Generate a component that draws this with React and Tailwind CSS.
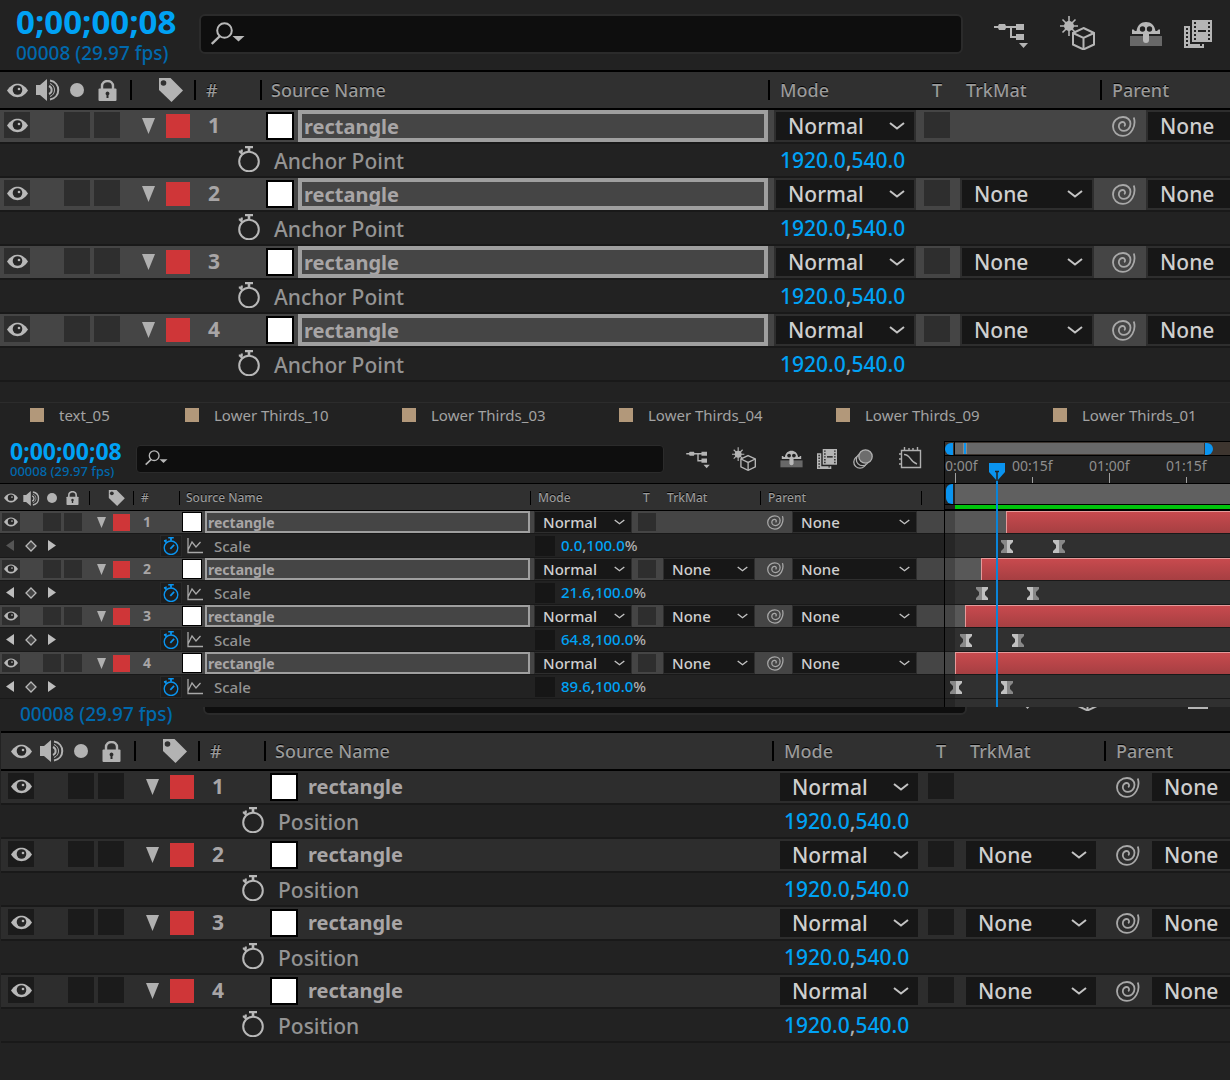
import clsx from "clsx";

// Every class that differs between the zoomed panels and the compact one
const sizes = {
  lg: {
    time: "text-[33px] leading-[36px]",
    fps: "text-[19px] leading-[26px]",
    timeBox: "w-[183px] pl-4 pt-1",
    search: "w-[764px] h-10 mt-3.5 border-2 rounded-md",
    searchIcon: "w-[34px] h-6 left-3 top-[22px]",
    topbar: "h-[70px]",
    header: "h-10 border-y-2 text-lg",
    headLeft: "w-[130px] pl-[7px]",
    headEye: "w-[21px] h-[15px]",
    headSpeaker: "w-6 h-[22px] ml-2",
    headDot: "w-3.5 h-3.5 ml-2.5",
    headLock: "w-[19px] h-[21px] ml-3.5",
    headTag: "w-16 pl-[26px] border-l-2",
    tag: "w-[25px] h-6",
    headNum: "w-[66px] pl-2.5 border-l-2",
    headName: "w-[508px] pl-[9px] border-l-2",
    headMode: "w-[162px] pl-2.5 border-l-2",
    headT: "w-9 pl-0.5",
    headTrk: "w-[134px]",
    headParent: "pl-2.5 border-l-2",
    headSep: "h-5",
    row: "h-8 pl-1",
    line: "h-0.5",
    box: "w-[26px] h-[26px] mt-0.5",
    eye: "w-[21px] h-[15px]",
    solo: "ml-[34px]",
    lock: "ml-1",
    twirl: "ml-[22px] w-[13px] h-4",
    label: "ml-[11px] w-6 h-6",
    num: "w-12 text-[21px]",
    thumb: "ml-7 w-7 h-7 border-2",
    name: "ml-1 w-[470px] h-8 text-xl",
    nameOn: "border-4 pl-0.5",
    nameOff: "pl-1.5 leading-8",
    mode: "ml-1.5 w-[142px]",
    tBox: "ml-2",
    trk: "ml-2.5 w-[134px]",
    spiral: "ml-[18px] w-6 h-[21px]",
    parent: "ml-2.5 w-[190px]",
    select: "h-8 border-2 pl-3 text-[21px]",
    chevron: "w-4 h-2 right-[11px] top-3",
    propRow: "h-8",
    propLeft: "w-[238px]",
    watch: "w-[22px] h-[26px]",
    watchBox: "h-[26px] w-[22px] pb-0.5",
    prop: "w-[506px] pl-3.5 text-[21px] pt-1",
    value: "ml-3.5 w-[200px] text-[21px] pt-0.5",
  },
  sm: {
    time: "text-[23px] leading-[21px]",
    fps: "text-[13px] leading-[18px]",
    timeBox: "w-[127px] pl-2.5",
    search: "w-[528px] h-7 mt-1 border rounded",
    searchIcon: "w-[23px] h-4 left-[9px] top-[9px]",
    topbar: "h-[42px]",
    header: "h-7 border-y pt-0.5 text-xs",
    headLeft: "w-[89px] pl-1",
    headEye: "w-[14px] h-[10px]",
    headSpeaker: "w-[17px] h-[15px] ml-[5px]",
    headDot: "w-2.5 h-2.5 ml-[7px]",
    headLock: "w-[13px] h-[14px] ml-[9px]",
    headTag: "w-11 pl-[18px] border-l",
    tag: "w-[17px] h-4",
    headNum: "w-[46px] pl-[7px] border-l",
    headName: "w-[351px] pl-1.5 border-l",
    headMode: "w-[113px] pl-[7px] border-l",
    headT: "w-6",
    headTrk: "w-[93px]",
    headParent: "pl-[7px] border-l",
    headSep: "h-3.5",
    row: "h-[22px] pl-0.5",
    line: "h-px",
    box: "w-[18px] h-[18px] mt-0.5",
    eye: "w-[14px] h-[10px]",
    solo: "ml-[23px]",
    lock: "ml-[3px]",
    twirl: "ml-[15px] w-[9px] h-[11px]",
    label: "ml-[7px] w-[17px] h-[17px]",
    num: "w-[34px] text-sm",
    thumb: "ml-[18px] w-5 h-5 border",
    name: "ml-[3px] w-[325px] h-[22px] text-sm",
    nameOn: "border-2 pl-px",
    nameOff: "pl-1",
    mode: "ml-1 w-[98px]",
    tBox: "ml-1.5",
    trk: "ml-[7px] w-[92px]",
    spiral: "ml-3 w-[17px] h-[15px]",
    parent: "ml-2 w-[125px]",
    select: "h-[22px] border pl-2 text-[15px]",
    chevron: "w-[11px] h-1.5 right-[7px] top-2",
    propRow: "h-[23px]",
    propLeft: "w-[160px]",
    watch: "w-4 h-[18px]",
    watchBox: "h-[22px] w-[22px] border border-[#292929] bg-[#1d1d1d]",
    prop: "w-[321px] pl-[11px] text-[15px] pt-0.5",
    value: "w-[200px] pl-1.5 text-[15px]",
  },
};

const layers = [
  { id: 1, start: 10, keys: [10, 20], scale: "0.0" },
  { id: 2, start: 5, keys: [5, 15], scale: "21.6" },
  { id: 3, start: 2, keys: [2, 12], scale: "64.8" },
  { id: 4, start: 0, keys: [0, 10], scale: "89.6" },
];

const tabs = ["text_05", "Lower Thirds_10", "Lower Thirds_03", "Lower Thirds_04", "Lower Thirds_09", "Lower Thirds_01"];

const frameX = (frame) => Math.round((frame * 77) / 15);

const Eye = ({ className }) => (
  <svg viewBox="0 0 21 15" className={className}>
    <path d="M0 7.500C3.500 2.500 7 .8 10.500 .8S17.500 2.500 21 7.500c-3.500 5-7 6.700-10.500 6.700S3.500 12.500 0 7.500z" fill="#b8b8b8" />
    <circle cx="10.500" cy="7" r="4.800" fill="#262626" />
    <circle cx="12" cy="6" r="1.300" fill="#b8b8b8" />
  </svg>
);

const Speaker = ({ className }) => (
  <svg viewBox="0 0 24 22" className={className} fill="none" stroke="#b3b3b3" strokeWidth="2">
    <path d="M0 6h4l7-6v22l-7-6H0z" fill="#b3b3b3" stroke="none" />
    <path d="M13 7c3.500 1.500 3.500 6.500 0 8" />
    <path d="M14 1.500c11 2 11 17 0 19" />
    <path d="M14 4.500c6 2 6 11 0 13" strokeWidth="1" />
  </svg>
);

const Lock = ({ className }) => (
  <svg viewBox="0 0 19 21" className={className}>
    <path d="M4 9V6a5.500 5 0 0 1 11 0v3" fill="none" stroke="#b3b3b3" strokeWidth="2.400" />
    <rect x=".5" y="8.500" width="18" height="12.500" rx="1" fill="#b3b3b3" />
    <path d="M9.500 11.500a2 2 0 0 1 1 3.700V18h-2v-2.800a2 2 0 0 1 1-3.700z" fill="#2c2c2c" />
  </svg>
);

const Tag = ({ className }) => (
  <svg viewBox="0 0 25 24" className={className}>
    <path d="M1 0h11.500L25 12.500 13.500 24 1 12z" fill="#b3b3b3" />
    <circle cx="5.500" cy="5" r="2.800" fill="#303030" />
  </svg>
);

const Stopwatch = ({ className, active }) => (
  <svg viewBox="0 0 22 26" className={className} fill="none" stroke={active ? "#0a94f0" : "#b8b8b8"} strokeWidth="2">
    <circle cx="11" cy="15.500" r="9.800" />
    <path d="M7 1h8M11 1v4.500" strokeWidth="2.600" />
    <path d="M.8 5.500h3v-2M2 6l3 2.500" />
    {active && <path d="M10 17l5.500-5.500" strokeWidth="2.600" />}
  </svg>
);

const Spiral = ({ className }) => (
  <svg viewBox="0 0 24 21" className={className} fill="none" stroke="#a8a8a8" strokeWidth="1.800">
    <path d="M21.800 1.500C24.500 10 19 19.800 11 19.800 5 19.800 1 15.500 1 10.500 1 5 5.500 1 11 1c4.500 0 7.500 3 7.500 6.800 0 4-3 7-6.500 7-3 0-5.200-2-5.200-4.600C6.800 7.500 9 5.800 11 6c2 .2 2.800 2.800 1.200 4.300" />
  </svg>
);

const SearchIcon = ({ className }) => (
  <svg viewBox="0 0 34 24" className={className}>
    <circle cx="13.500" cy="8.500" r="7.300" fill="none" stroke="#b8b8b8" strokeWidth="2" />
    <path d="M9 14L.8 22" stroke="#b8b8b8" strokeWidth="2.400" />
    <path d="M21.500 14h12l-6 5.500z" fill="#b8b8b8" />
  </svg>
);

const FlowIcon = ({ className }) => (
  <svg viewBox="0 0 34 26" className={className} fill="#b5b5b5">
    <path d="M0 3h4l1-2h6l1 2h10V1h8v6h-8V5h-4v8h4v-2h8v6h-8v-2h-6V5h-4l-1 2H5L4 5H0z" />
    <path d="M25 20h9l-4.500 5z" />
  </svg>
);

const DraftIcon = ({ className }) => (
  <svg viewBox="0 0 35 34" className={className} fill="none" stroke="#b5b5b5">
    <circle cx="9" cy="10" r="5" fill="#b5b5b5" stroke="none" />
    <path d="M9 0v20M0 10h18M2.500 3.500l13 13M15.500 3.500l-13 13" strokeWidth="1.600" />
    <path d="M23.500 12l10.500 5v11.500l-10.500 5-10.500-5V17z" fill="#222" strokeWidth="2" />
    <path d="M13 17l10.500 5L34 17M23.500 22v11" strokeWidth="2" />
  </svg>
);

const ShyIcon = ({ className }) => (
  <svg viewBox="0 0 32 26" className={className}>
    <path d="M0 15h32v10H0z" fill="#686868" />
    <path d="M2 13V8.500h1.500l1.500 1.500h1.500C7.500 4 11 1 16 1s8.500 3 9.500 9H27l1.500-1.500H30V13z" fill="#b8b8b8" />
    <path d="M13 10h6v9a3 3 0 0 1-6 0z" fill="#b8b8b8" />
    <circle cx="12.500" cy="8" r="2.700" fill="#222" />
    <circle cx="19.500" cy="8" r="2.700" fill="#222" />
  </svg>
);

const FilmIcon = ({ className }) => (
  <svg viewBox="0 0 28 28" className={className}>
    <path d="M0 6h6v18h14v4H0z" fill="#b5b5b5" />
    <path d="M3 8v18" stroke="#222" strokeWidth="2" strokeDasharray="2 2" />
    <path d="M16 25h2" stroke="#222" strokeWidth="2" />
    <path d="M8 0h20v22H8z" fill="#b5b5b5" />
    <path d="M11 2v20M25 2v20" stroke="#222" strokeWidth="2" strokeDasharray="2 2" />
    <path d="M14 11h8" stroke="#222" strokeWidth="2" />
  </svg>
);

const BlurIcon = ({ className }) => (
  <svg viewBox="0 0 20 20" className={className} fill="#222" stroke="#b0b0b0" strokeWidth="1.300">
    <circle cx="7" cy="13" r="6.200" />
    <circle cx="9.500" cy="10.500" r="6.200" />
    <circle cx="12.500" cy="7.500" r="6.700" fill="#6d6d6d" />
  </svg>
);

const GraphEditorIcon = ({ className }) => (
  <svg viewBox="0 0 23 22" className={className} fill="none" stroke="#b0b0b0" strokeWidth="1.400">
    <path d="M2.500 3.500h19v17h-19z" />
    <path d="M5 7.500c7 0 5 7 13 9.500" />
    <path d="M5.500 3V0M10 3V1M14 3V1M18.500 3V0M2 7H0M2 12H0M2 17H0" />
  </svg>
);

const Chevron = ({ className }) => (
  <svg viewBox="0 0 16 8" className={className} fill="none" stroke="#c4c4c4" strokeWidth="2">
    <path d="M1 1l7 5.500L15 1" />
  </svg>
);

const Keyframe = ({ left, out }) => (
  <svg viewBox="0 0 12 13" className="absolute top-1.5 w-3 h-[13px]" style={{ left }}>
    <path d="M0 0h6v13H0v-2l3-3V5L0 2z" fill={out ? "#c0c0c0" : "#888"} />
    <path d="M12 0H6v13h6v-2L9 8V5l3-3z" fill={out ? "#888" : "#c0c0c0"} />
  </svg>
);

const Dropdown = ({ s, label, value, options, selected, className }) => (
  <div className={clsx("relative shrink-0", className)}>
    <select
      aria-label={label}
      defaultValue={value}
      className={clsx(
        "block w-full appearance-none bg-[#171717] bg-clip-padding py-0 leading-none font-medium text-[#cfcfcf] outline-none",
        selected ? "border-[#2e2e2e]" : "border-transparent",
        s.select
      )}
    >
      {options.map((option) => (
        <option key={option}>{option}</option>
      ))}
    </select>
    <Chevron className={clsx("absolute pointer-events-none", s.chevron)} />
  </div>
);

const TopBar = ({ s, children }) => (
  <div className={clsx("flex shrink-0 items-start", s.topbar)}>
    <div className={clsx("shrink-0 whitespace-nowrap", s.timeBox)}>
      <div className={clsx("font-bold text-[#00a2f5]", s.time)}>0;00;00;08</div>
      <div className={clsx("font-medium text-[#0069ad]", s.fps)}>00008 (29.97 fps)</div>
    </div>
    <div className={clsx("relative", s === sizes.sm ? "ml-[9px]" : "ml-4")}>
      <input
        type="search"
        aria-label="Search layers"
        className={clsx("block bg-[#0e0e0e] border-[#2b2b2b] pl-12 text-[#c0c0c0] outline-none", s.search)}
      />
      <SearchIcon className={clsx("absolute pointer-events-none", s.searchIcon)} />
    </div>
    {children}
  </div>
);

const ZoomedTopBar = () => (
  <TopBar s={sizes.lg}>
    <button aria-label="Mini flowchart" className="ml-[31px] mt-[23px] shrink-0"><FlowIcon className="w-[34px] h-[26px]" /></button>
    <button aria-label="Draft 3D" className="ml-8 mt-4 shrink-0"><DraftIcon className="w-[35px] h-[34px]" /></button>
    <button aria-label="Hide shy layers" className="ml-[35px] mt-[21px] shrink-0"><ShyIcon className="w-8 h-[26px]" /></button>
    <button aria-label="Frame blending" className="ml-[22px] mt-5 shrink-0"><FilmIcon className="w-7 h-7" /></button>
  </TopBar>
);

const HeaderCell = ({ s, className, children }) => (
  <div className={clsx("flex shrink-0 items-center border-black", s.headSep, className)}>{children}</div>
);

const ColumnHeader = ({ s, className, children }) => (
  <div
    className={clsx(
      "flex items-center overflow-hidden whitespace-nowrap bg-[#303030] border-black font-medium text-[#9a9a9a] [text-shadow:0_-1px_0_#000]",
      s.header,
      className
    )}
  >
    <div className={clsx("flex shrink-0 items-center", s.headLeft)}>
      <Eye className={s.headEye} />
      <Speaker className={s.headSpeaker} />
      <span className={clsx("rounded-full bg-[#b3b3b3]", s.headDot)} />
      <Lock className={s.headLock} />
    </div>
    <HeaderCell s={s} className={s.headTag}><Tag className={clsx("shrink-0", s.tag)} /></HeaderCell>
    <HeaderCell s={s} className={s.headNum}>#</HeaderCell>
    <HeaderCell s={s} className={s.headName}>Source Name</HeaderCell>
    <HeaderCell s={s} className={s.headMode}>Mode</HeaderCell>
    <HeaderCell s={s} className={s.headT}>T</HeaderCell>
    <HeaderCell s={s} className={s.headTrk}>TrkMat</HeaderCell>
    <HeaderCell s={s} className={s.headParent}>Parent</HeaderCell>
    {children}
  </div>
);

const LayerRow = ({ s, layer, selected }) => {
  const box = clsx("flex shrink-0 items-center justify-center self-start", selected ? "bg-[#2e2e2e]" : "bg-[#1b1b1b]", s.box);
  const name = clsx("block shrink-0 font-bold text-[#a8a5a6]", s.name);

  return (
    <div className={clsx("flex items-center", selected ? "bg-[#454545]" : "border-l-[3px] border-[#2d2d2d] bg-[#2d2d2d]", s.row)}>
      <button aria-label="Toggle visibility" className={box}><Eye className={s.eye} /></button>
      <button aria-label="Solo" className={clsx(box, s.solo)} />
      <button aria-label="Lock" className={clsx(box, s.lock)} />
      <button aria-label="Collapse layer" className={clsx("shrink-0", s.twirl)}>
        <svg viewBox="0 0 13 16" className="w-full h-full" fill="#b0b0b0"><path d="M0 0h13L6.500 16z" /></svg>
      </button>
      <button aria-label="Label colour" className={clsx("shrink-0 bg-[#cf3638]", s.label)} />
      <span className={clsx("shrink-0 text-center font-bold text-[#a8a5a6]", s.num)}>{layer.id}</span>
      <span className={clsx("shrink-0 bg-white border-black", s.thumb)} />
      {selected ? (
        <input aria-label="Layer name" defaultValue="rectangle" className={clsx(name, "bg-transparent border-[#9f9f9f] outline-none", s.nameOn)} />
      ) : (
        <span className={clsx(name, s.nameOff)}>rectangle</span>
      )}
      <Dropdown s={s} label="Mode" value="Normal" options={["Normal", "Multiply", "Screen"]} selected={selected} className={s.mode} />
      <button aria-label="Preserve transparency" className={clsx(box, s.tBox)} />
      {layer.id === 1 ? (
        <span className={clsx("shrink-0", s.trk)} />
      ) : (
        <Dropdown s={s} label="Track matte" value="None" options={["None", "Alpha Matte", "Luma Matte"]} selected={selected} className={s.trk} />
      )}
      <Spiral className={clsx("shrink-0", s.spiral)} />
      <Dropdown s={s} label="Parent" value="None" options={["None"]} selected={selected} className={s.parent} />
    </div>
  );
};

const Line = ({ s }) => <div className={clsx("bg-[#191919]", s.line)} />;

const ZoomedLayers = ({ property, selected }) => {
  const s = sizes.lg;
  return layers.map((layer) => (
    <div key={layer.id}>
      <LayerRow s={s} layer={layer} selected={selected} />
      <Line s={s} />
      <div className={clsx("flex items-center whitespace-nowrap", !selected && "pl-[3px]", s.propRow)}>
        <span className={clsx("shrink-0", s.propLeft)} />
        <button aria-label="Toggle animation" className={clsx("flex shrink-0 items-center justify-center", s.watchBox)}>
          <Stopwatch className={clsx("shrink-0", s.watch)} />
        </button>
        <span className={clsx("shrink-0 font-medium text-[#949494]", s.prop)}>{property}</span>
        <span className={clsx("font-medium text-[#00a2f5]", s.value)}>
          1920.0<span className="text-[#b0b0b0]">,</span>540.0
        </span>
      </div>
      <Line s={s} />
    </div>
  ));
};

const CompactLayers = () => {
  const s = sizes.sm;
  return layers.map((layer) => (
    <div key={layer.id}>
      <LayerRow s={s} layer={layer} selected />
      <Line s={s} />
      <div className={clsx("flex items-center whitespace-nowrap", s.propRow)}>
        <div className={clsx("flex shrink-0 items-center pl-1.5", s.propLeft)}>
          <button aria-label="Previous keyframe">
            <svg viewBox="0 0 8 11" className="w-2 h-[11px]" fill={layer.id === 1 ? "#555" : "#bdbdbd"}><path d="M8 0v11L0 5.500z" /></svg>
          </button>
          <button aria-label="Add keyframe" className="ml-[11px]">
            <svg viewBox="0 0 12 12" className="w-3 h-3" fill="#444" stroke="#b8b8b8" strokeWidth="1.300"><path d="M6 1l5 5-5 5-5-5z" /></svg>
          </button>
          <button aria-label="Next keyframe" className="ml-[11px]">
            <svg viewBox="0 0 8 11" className="w-2 h-[11px]" fill="#bdbdbd"><path d="M0 0v11l8-5.500z" /></svg>
          </button>
        </div>
        <button aria-label="Toggle animation" className={clsx("flex shrink-0 items-center justify-center", s.watchBox)}>
          <Stopwatch active className={s.watch} />
        </button>
        <button aria-label="Show graph" className="ml-[5px] shrink-0">
          <svg viewBox="0 0 16 16" className="w-4 h-4" fill="none" stroke="#a8a8a8" strokeWidth="1.300">
            <path d="M1 0v14.500h15M1 12l4-8 4 5 4.500-5" />
          </svg>
        </button>
        <span className={clsx("shrink-0 font-medium text-[#949494]", s.prop)}>Scale</span>
        <span className="ml-[11px] h-5 w-5 shrink-0 bg-[#161616]" />
        <span className={clsx("font-medium text-[#00a2f5]", s.value)}>
          {layer.scale}<span className="text-[#b0b0b0]">,</span>100.0<span className="text-[#b0b0b0]">%</span>
        </span>
      </div>
      <Line s={s} />
    </div>
  ));
};

const Timeline = () => (
  <div className="relative min-w-0 flex-1 overflow-hidden border-l border-black">
    <div className="flex h-[15px] items-center border-y border-black bg-[#3d352f]">
      <span className="h-3 w-2 rounded-l-full bg-[#0a94f0]" />
      <span className="ml-px h-full w-px bg-black" />
      <div className="relative h-[11px] w-[249px] bg-[#686868]">
        <span className="absolute left-2 h-full w-1 border-x border-[#8a8a8a] bg-[#0a94f0]" />
      </div>
      <span className="ml-px h-3 w-2 rounded-r-full bg-[#0a94f0]" />
    </div>
    <div className="relative h-[27px] text-sm text-[#8e8e8e]">
      {["0:00f", "00:15f", "01:00f", "01:15f"].map((label, i) => (
        <div key={label} className="absolute inset-y-0" style={{ left: 10 + frameX(i * 15) }}>
          <span className={clsx("absolute bottom-0 w-px bg-[#a0a0a0]", i % 2 ? "h-1.5" : "h-2.5")} />
          <span className={clsx("absolute", i === 0 ? "-left-2.5" : "-left-5")}>{label}</span>
        </div>
      ))}
    </div>
    <div className="flex h-[22px] border-y border-black">
      <span className="ml-px w-[7px] rounded-l-md bg-[#0a94f0]" />
      <span className="ml-0.5 flex-1 bg-[#606060]" />
    </div>
    <div className="ml-2.5 h-1 bg-[#00c40c]" />
    <div className="h-0.5 bg-black" />
    <div className="bg-[#262626]">
      {layers.map((layer) => (
        <div key={layer.id}>
          <div className="flex h-[22px] bg-[#454545]">
            <span className="w-2.5 shrink-0" />
            <span className="shrink-0 bg-[#585858]" style={{ width: frameX(layer.start) }} />
            <span className="flex-1 border-l border-t border-[#e59a9a] bg-linear-to-b from-[#c84a4e] to-[#a63f42]" />
          </div>
          <div className="h-px bg-[#191919]" />
          <div className="relative h-[23px]">
            <div className="ml-2.5 h-full bg-[#303030]" />
            {layer.keys.map((key, i) => (
              <Keyframe key={key} left={5 + frameX(key)} out={i === 1} />
            ))}
          </div>
          <div className="h-px bg-[#191919]" />
        </div>
      ))}
      <div className="ml-2.5 h-2 bg-[#303030]" />
    </div>
    <div className="absolute bottom-0 top-[21px] w-4" style={{ left: 3 + frameX(8) }}>
      <span className="absolute bottom-0 left-[7px] top-4 w-0.5 bg-[#0a84d8]" />
      <svg viewBox="0 0 16 19" className="absolute w-4 h-[19px]">
        <path d="M0 1h16v9l-8 9-8-9z" fill="#0a94f0" />
        <path d="M8 9v10M6 9.500h4" stroke="#222" strokeWidth="1.500" />
      </svg>
    </div>
  </div>
);

const App = () => {
  return (
    <main className="min-h-screen overflow-hidden bg-[#222] font-['Noto_Sans',sans-serif]">
      <section className="overflow-hidden pb-5">
        <ZoomedTopBar />
        <ColumnHeader s={sizes.lg} />
        <ZoomedLayers property="Anchor Point" selected />
      </section>

      <section className="border-t border-[#2c2c2c]">
        <nav className="flex h-[38px] overflow-hidden whitespace-nowrap pl-[30px] text-[15px] text-[#a3a3a3]">
          {tabs.map((tab, i) => (
            <button key={tab} className={clsx("flex shrink-0 items-center gap-[15px] pb-3.5", i === 0 ? "w-[155px]" : "w-[217px]")}>
              <span className="h-3.5 w-3.5 bg-[#b2987a]" />
              {tab}
            </button>
          ))}
        </nav>
        <div className="flex">
          <div className="w-[944px] shrink-0 overflow-hidden pb-2">
            <TopBar s={sizes.sm}>
              <button aria-label="Mini flowchart" className="ml-[22px] mt-2.5"><FlowIcon className="w-6 h-[18px]" /></button>
              <button aria-label="Draft 3D" className="ml-[22px] mt-1.5"><DraftIcon className="w-6 h-6" /></button>
              <button aria-label="Hide shy layers" className="ml-6 mt-[9px]"><ShyIcon className="w-[23px] h-[18px]" /></button>
              <button aria-label="Frame blending" className="ml-3.5 mt-2"><FilmIcon className="w-5 h-5" /></button>
              <button aria-label="Motion blur" className="ml-4 mt-2"><BlurIcon className="w-5 h-5" /></button>
              <button aria-label="Graph editor" className="ml-[26px] mt-1.5"><GraphEditorIcon className="w-[23px] h-[22px]" /></button>
            </TopBar>
            <ColumnHeader s={sizes.sm}>
              <span className="ml-auto mr-[22px] h-3.5 w-px bg-black" />
            </ColumnHeader>
            <CompactLayers />
          </div>
          <Timeline />
        </div>
      </section>

      <section className="overflow-hidden pl-px">
        <div className="flex h-6 flex-col justify-end overflow-hidden pl-[3px]">
          <ZoomedTopBar />
        </div>
        <ColumnHeader s={sizes.lg} className="pl-[3px]" />
        <ZoomedLayers property="Position" />
      </section>
    </main>
  );
};

export default App;
